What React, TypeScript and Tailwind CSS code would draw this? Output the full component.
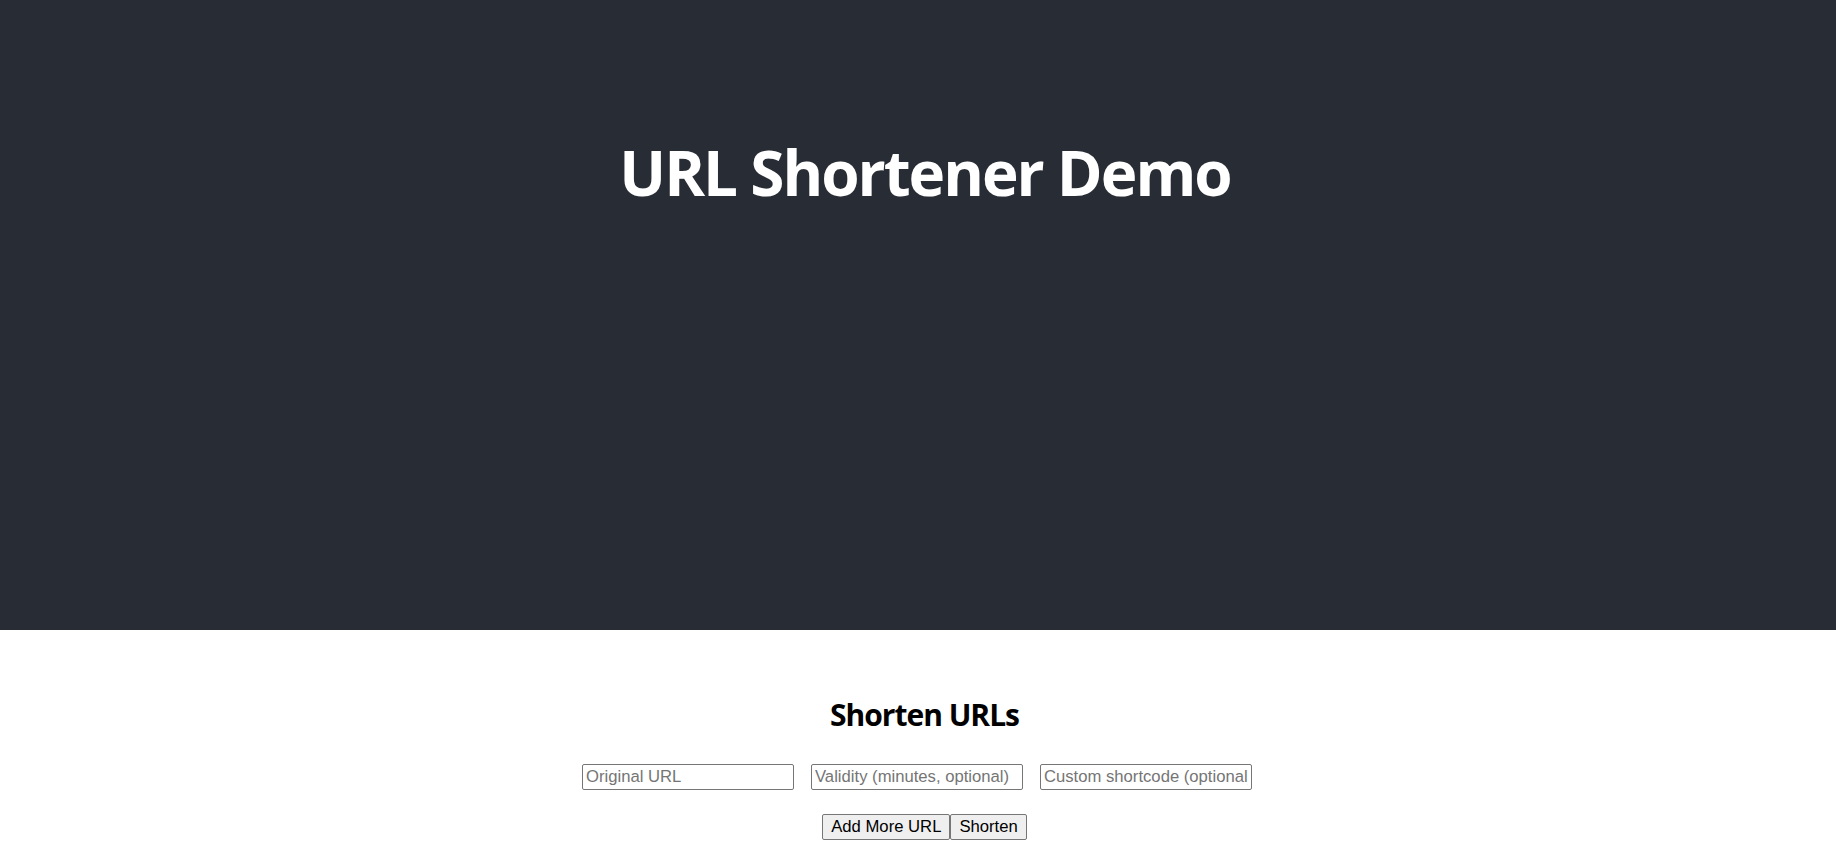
import React from "react";

export default function App() {
  const seg = { fontFamily: '"Open Sans", "Noto Sans", sans-serif' };
  const arial = { fontFamily: '"Liberation Sans", Arial, sans-serif' };
  return (
    <div className="min-h-[860px] bg-white">
      <header className="h-[630px] bg-[#282c34] flex flex-col items-center pt-[141px] pl-[14px]">
        <h1 style={seg} className="text-[62px] leading-none font-bold text-white tracking-[-2px]">
          URL Shortener Demo
        </h1>
      </header>
      <main className="flex flex-col items-center">
        <h2 style={seg} className="mt-[70px] pl-[13px] text-[30px] leading-none font-bold text-black tracking-[-1px]">
          Shorten URLs
        </h2>
        <div className="mt-[34px] flex justify-center gap-[17px] pr-[2px]" style={arial}>
          {["Original URL", "Validity (minutes, optional)", "Custom shortcode (optional)"].map((p) => (
            <input
              key={p}
              placeholder={p}
              className="w-[212px] h-[26px] border border-[#767676] rounded-[2px] px-[3px] text-[16.67px] text-black bg-white placeholder:text-[#757575] outline-none"
            />
          ))}
        </div>
        <div className="mt-[24px] flex justify-center pl-[13px]" style={arial}>
          <button className="h-[26px] px-[8px] border border-[#767676] rounded-[2px] bg-[#efefef] text-[16.67px] leading-none text-black">
            Add More URL
          </button>
          <button className="h-[26px] px-[8px] border border-[#767676] rounded-[2px] bg-[#efefef] text-[16.67px] leading-none text-black">
            Shorten
          </button>
        </div>
      </main>
    </div>
  );
}
